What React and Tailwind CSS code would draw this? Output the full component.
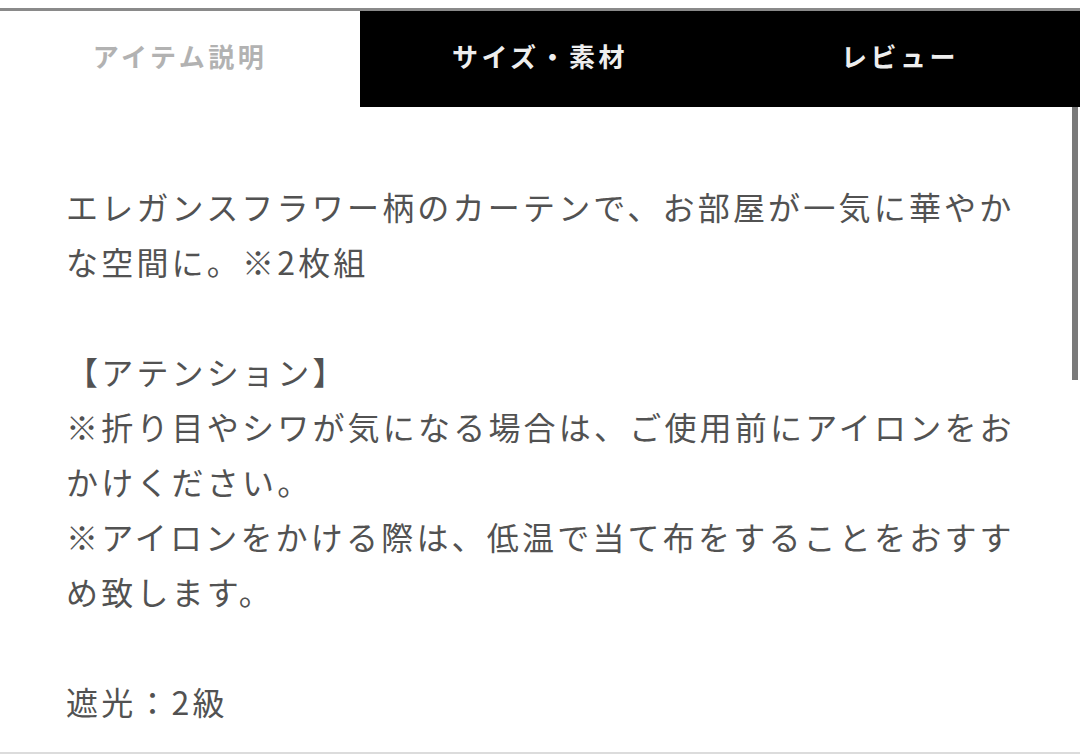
export default function App() {
    const tabs = ['アイテム説明', 'サイズ・素材', 'レビュー'];
    const active = 0;

    const lines = [
        'エレガンスフラワー柄のカーテンで、お部屋が一気に華やか',
        'な空間に。※2枚組',
        '',
        '【アテンション】',
        '※折り目やシワが気になる場合は、ご使用前にアイロンをお',
        'かけください。',
        '※アイロンをかける際は、低温で当て布をすることをおすす',
        'め致します。',
        '',
        '遮光：2級',
    ];

    return (
        <main
            className="w-[1080px] h-[754px] bg-white overflow-hidden flex flex-col"
            style={{ fontFamily: '"Noto Sans CJK JP", "Noto Sans", sans-serif' }}
        >
            {/* Tabs */}
            <div className="pt-[8px] shrink-0">
                <div className="h-[3px] bg-[#8a8a8a]" />
                <div className="flex h-[96px]">
                    {tabs.map((t, i) => (
                        <div
                            key={t}
                            className={
                                'w-[360px] flex items-center justify-center pb-[8px] text-[26px] font-semibold tracking-[3.5px] ' +
                                (i === active ? 'bg-white text-[#b2b2b2]' : 'bg-black text-[#eeeeee]')
                            }
                        >
                            {t}
                        </div>
                    ))}
                </div>
            </div>

            {/* Body */}
            <div className="flex flex-1 min-h-0">
                <div className="flex-1 pl-[66px] pt-[72px] text-[32px] leading-[55px] tracking-[3.2px] text-[#525252]">
                    {lines.map((l, i) => (
                        <div key={i} className="whitespace-nowrap h-[55px]">
                            {l}
                        </div>
                    ))}
                </div>
                <div className="w-[8px] pr-[2px] shrink-0">
                    <div className="w-[6px] h-[273px] bg-[#7a7a7a]" />
                </div>
            </div>
            <div className="h-[2px] bg-[#dcdcdc] shrink-0" />
        </main>
    );
}
